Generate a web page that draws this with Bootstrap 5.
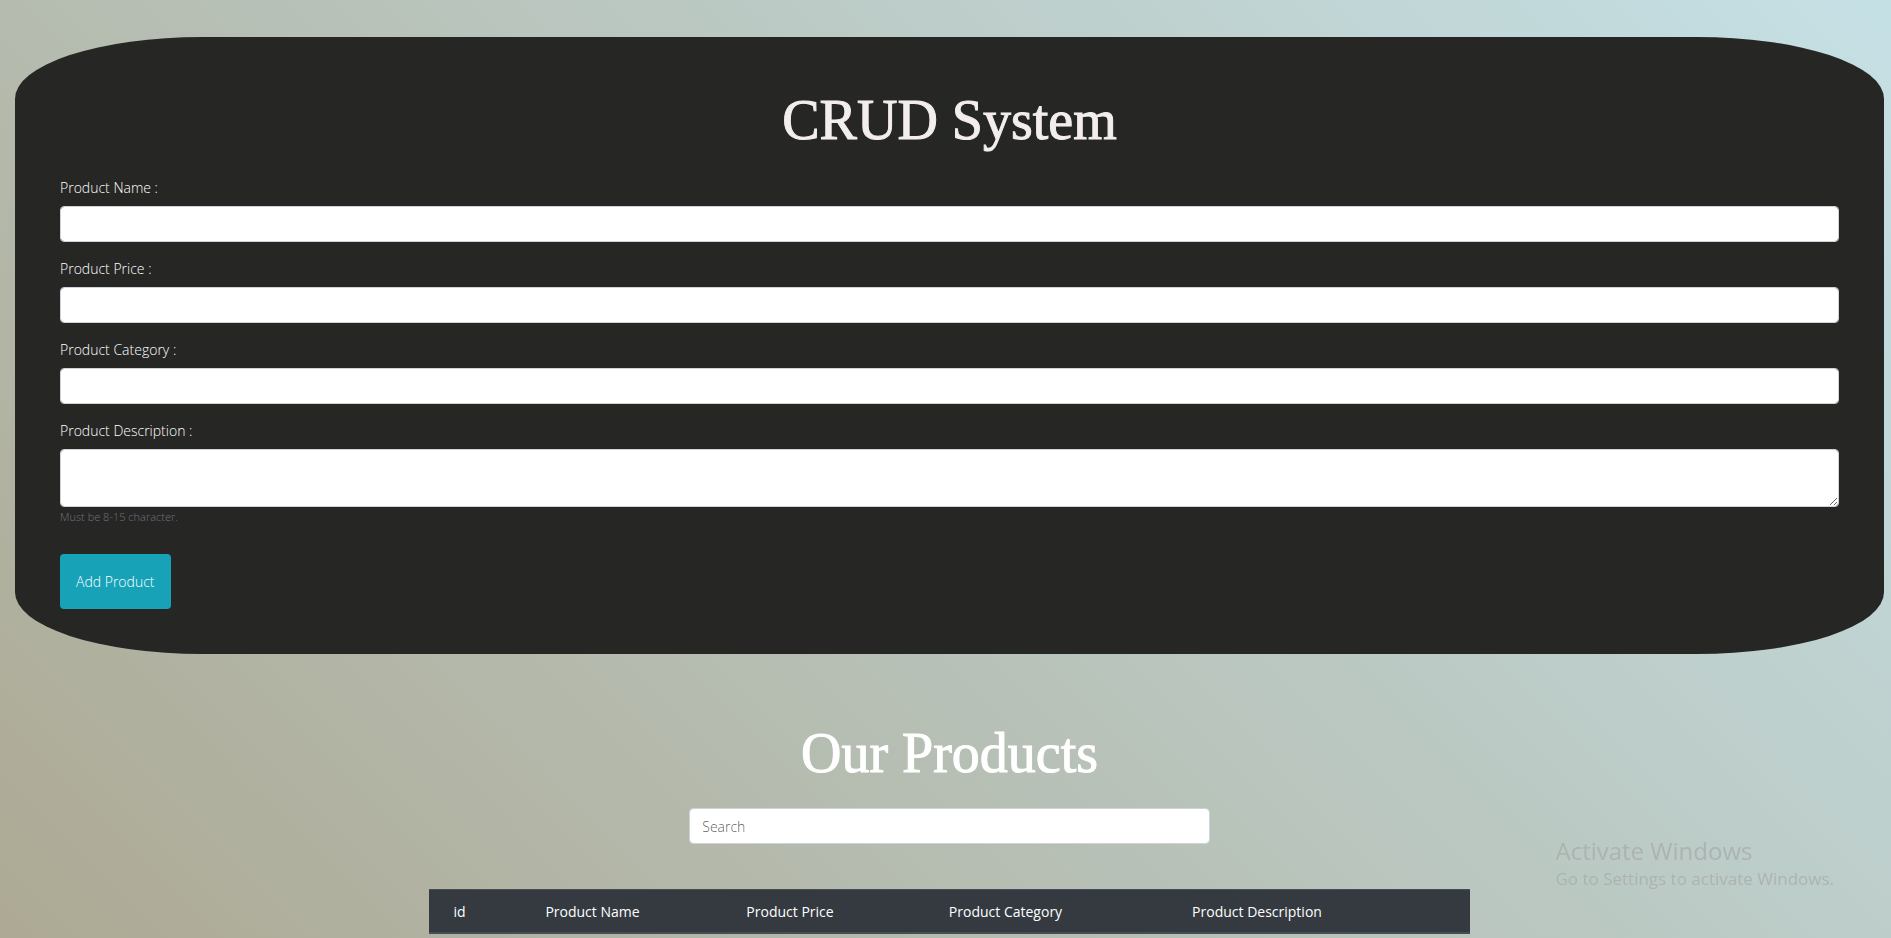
<!DOCTYPE html>
<html lang="en">
<head>
<meta charset="utf-8">
<meta name="viewport" content="width=device-width, initial-scale=1">
<title>CRUD System</title>
<link href="https://cdn.jsdelivr.net/npm/bootstrap@5.3.0/dist/css/bootstrap.min.css" rel="stylesheet">
<style>
  body {
    min-height: 100vh;
    font-family: "Open Sans", "Noto Sans", sans-serif;
    font-size: 14px;
    line-height: 24px;
    font-weight: 300;
    background: linear-gradient(45deg, #ada994, #c5e0e5) fixed;
  }
  .page { padding: 37px 7px 4px 15px; }
  .panel { background: #262625; border-radius: 10%; padding: 45px; }
  .title {
    font-family: "Liberation Serif", serif;
    font-size: 56px;
    line-height: 60px;
    font-weight: 400;
    -webkit-text-stroke: 1px currentColor;
  }
  .panel .title { color: #f3eeec; margin: 8px 0 26px; }
  .field { margin-bottom: 15px; }
  .form-label { display: block; color: #fff; margin-bottom: 6px; }
  .form-control {
    height: 36px;
    border: 1px solid #ced4da;
    border-radius: 4px;
    font-size: 14px;
    font-weight: 300;
    padding: 6px 12px;
  }
  textarea.form-control { height: 58px; }
  .hint { font-size: 11px; line-height: 20px; color: #6c757d; }
  .btn-add {
    height: 55px;
    margin-top: 27px;
    padding: 0 16px;
    background: #17a2b8;
    color: #fff;
    font-size: 14px;
    font-weight: 300;
    border: 0;
    border-radius: 4px;
  }
  .btn-add:hover { background: #138496; color: #fff; }
  .products { max-width: 1041px; }
  .products .title { color: #fff; margin: 69px 0 25px; }
  .product-table { table-layout: fixed; margin: 45px 0 0; }
  .product-table th {
    background: #343a40;
    color: #fff;
    border: solid #454d55;
    border-width: 1px 0 2px;
    padding: 10px 0 8px;
    font-weight: 500;
    box-shadow: none;
  }
  .col-id { width: 61px; }
  .col-name { width: 205px; }
  .col-price { width: 190px; }
  .col-category { width: 241px; }
  .col-description { width: 262px; }
  .watermark {
    right: 57px;
    bottom: 47px;
    color: #acb3b2;
    font-size: 17px;
    font-weight: 400;
    pointer-events: none;
  }
  .watermark strong { display: block; font-size: 24px; line-height: 32px; font-weight: 400; }
</style>
</head>
<body>
<main class="page">
  <form class="panel">
    <h1 class="title text-center">CRUD System</h1>
    <div class="field">
      <label class="form-label" for="productName">Product Name :</label>
      <input class="form-control" type="text" id="productName">
    </div>
    <div class="field">
      <label class="form-label" for="productPrice">Product Price :</label>
      <input class="form-control" type="text" id="productPrice">
    </div>
    <div class="field">
      <label class="form-label" for="productCategory">Product Category :</label>
      <input class="form-control" type="text" id="productCategory">
    </div>
    <div>
      <label class="form-label" for="productDescription">Product Description :</label>
      <textarea class="form-control" id="productDescription" aria-describedby="descriptionHint"></textarea>
      <div class="hint" id="descriptionHint">Must be 8-15 character.</div>
    </div>
    <button class="btn btn-add" type="button">Add Product</button>
  </form>

  <section class="products mx-auto">
    <h2 class="title text-center">Our Products</h2>
    <input class="form-control w-50 mx-auto" type="search" placeholder="Search" aria-label="Search products">
    <table class="table product-table text-center">
      <colgroup>
        <col class="col-id"><col class="col-name"><col class="col-price"><col class="col-category"><col class="col-description"><col>
      </colgroup>
      <thead>
        <tr>
          <th scope="col">id</th>
          <th scope="col">Product Name</th>
          <th scope="col">Product Price</th>
          <th scope="col">Product Category</th>
          <th scope="col">Product Description</th>
          <th></th>
        </tr>
      </thead>
    </table>
  </section>
</main>
<aside class="watermark position-fixed"><strong>Activate Windows</strong>Go to Settings to activate Windows.</aside>
<script src="https://cdn.jsdelivr.net/npm/bootstrap@5.3.0/dist/js/bootstrap.bundle.min.js"></script>
</body>
</html>
